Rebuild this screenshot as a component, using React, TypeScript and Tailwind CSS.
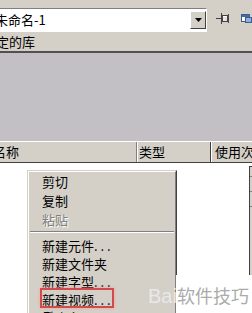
export default function App() {
  return (
    <div className="relative h-[313px] w-[252px] overflow-hidden bg-white font-['Noto_Sans_CJK_SC',sans-serif] text-[13px] text-black">
      {/* library toolbar */}
      <div className="flex h-[33px] items-start bg-[#d4d0c8] pt-[8px]">
        <div className="flex h-[24px] w-[208px] items-center overflow-hidden border-y border-r border-t-[#808080] border-b-white border-r-white bg-white">
          <span className="-ml-[5px] flex-1 whitespace-nowrap leading-[22px]">未命名-1</span>
          <div className="mr-[0px] flex h-[18px] w-[16px] items-center justify-center border border-t-white border-l-white border-r-[#404040] border-b-[#404040] bg-[#d4d0c8]">
            <svg width="7" height="4" viewBox="0 0 7 4">
              <path d="M0 0h7L3.5 4z" fill="#000" />
            </svg>
          </div>
        </div>
        <svg className="ml-[9px] mt-[5px]" width="14" height="11" viewBox="0 0 14 11">
          <path d="M0 5.5h5" stroke="#404040" />
          <path d="M5.5 0v11" stroke="#404040" />
          <rect x="6.5" y="2.5" width="5" height="6" fill="#e8e6e0" stroke="#404040" />
          <path d="M7 3.5h4" stroke="#ffffff" />
          <path d="M12.5 1v9" stroke="#404040" />
        </svg>
        <svg className="ml-[11px] mt-[4px]" width="11" height="12" viewBox="0 0 11 12">
          <rect x="0.5" y="2.5" width="8" height="7" fill="#ffffff" stroke="#3d5a8a" />
          <rect x="1" y="3" width="7" height="2" fill="#3a6ea5" />
          <rect x="4.5" y="5.5" width="6" height="5" fill="#8fb0dd" stroke="#3d5a8a" />
        </svg>
      </div>

      {/* library name */}
      <div className="h-[20px] border-b-2 border-[#505050] bg-[#d4d0c8]">
        <span className="-ml-[4px] block whitespace-nowrap leading-[18px]">定的库</span>
      </div>

      {/* preview area */}
      <div className="h-[88px] bg-[#c2c0c4]" />

      {/* column headers */}
      <div className="flex h-[22px] border-t border-b border-t-white border-b-[#404040] bg-[#d4d0c8] leading-[20px]">
        <div className="w-[137px] overflow-hidden border-r border-[#808080]">
          <span className="-ml-[7px] block whitespace-nowrap">名称</span>
        </div>
        <div className="w-[74px] border-l border-r border-l-white border-r-[#404040] pl-[1px]">类型</div>
        <div className="flex-1 overflow-hidden whitespace-nowrap border-l border-white pl-[3px]">使用次</div>
      </div>

      {/* list */}
      <div className="flex h-[150px]">
        <div className="flex-1 bg-white" />
        <div className="mt-[3px] flex h-[110px] w-[3px] flex-col border-l border-t border-[#404040] bg-[#d4d0c8]">
          <div className="h-[10px] border-b border-[#808080]" />
          <div className="h-[15px] border-b border-[#808080]" />
          <div className="h-[15px] border-b border-[#808080]" />
        </div>
      </div>

      {/* context menu */}
      <div className="absolute left-[27px] top-[170px] w-[150px] border border-t-[#d4d0c8] border-l-[#d4d0c8] border-r-[#404040] border-b-[#404040] bg-[#d4d0c8]">
        <div className="border border-t-white border-l-white border-r-[#808080] border-b-[#808080]">
          <div className="h-[19px] pl-[13px] leading-[19px]">剪切</div>
          <div className="h-[19px] pl-[13px] leading-[19px]">复制</div>
          <div className="h-[19px] pl-[13px] leading-[19px] text-[#808080] [text-shadow:1px_1px_0_#ffffff]">粘贴</div>
          <div className="mx-[1px] mb-[4px] mt-[2px] border-t border-b border-t-[#808080] border-b-white" />
          <div className="h-[18px] pl-[13px] leading-[18px]">新建元件. . .</div>
          <div className="h-[18px] pl-[13px] leading-[18px]">新建文件夹</div>
          <div className="h-[18px] pl-[13px] leading-[18px]">新建字型. . .</div>
          <div className="h-[18px] pl-[13px] leading-[18px]">新建视频. . .</div>
          <div className="h-[18px] pl-[13px] leading-[18px]">重命名</div>
          <div className="h-[18px] pl-[13px] leading-[18px]">移至新文件夹. . .</div>
        </div>
        <div className="absolute left-[12px] top-[117px] h-[20px] w-[74px] border-2 border-[#d24a4a] shadow-[0_0_3px_#f0a0a0]" />
      </div>

      {/* watermark */}
      <div className="absolute left-[176px] top-[275px] h-[38px] w-[76px] bg-white" />
      <div className="absolute left-[148px] top-[284px] flex items-baseline whitespace-nowrap">
        <span className="font-['Liberation_Sans',sans-serif] text-[20px] leading-[22px] text-[#e8e8e8]">Bai</span>
        <span className="text-[18px] leading-[22px] text-[#ababab]">软件技巧</span>
      </div>
    </div>
  );
}
